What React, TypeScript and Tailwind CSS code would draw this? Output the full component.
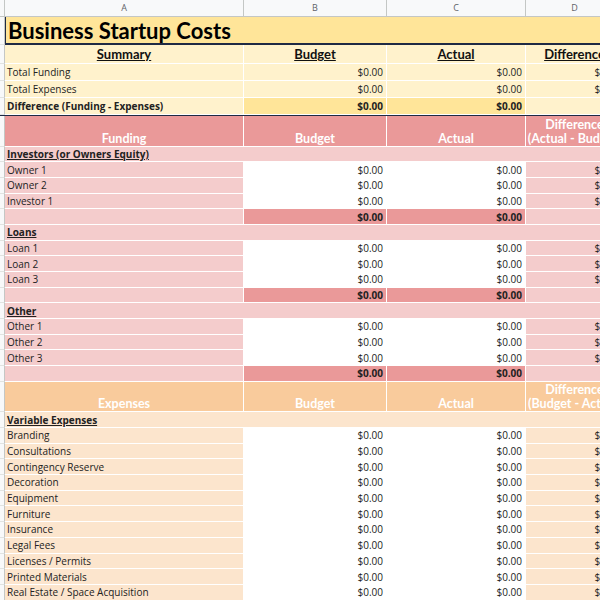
import React from 'react';

type Row =
  | { kind: 'section'; label: string; tone: 'red' | 'orange' }
  | { kind: 'item'; label: string; tone: 'red' | 'orange' }
  | { kind: 'subtotal'; tone: 'red' | 'orange' }
  | { kind: 'header'; label: string; diff: string; tone: 'red' | 'orange' };

const tones = {
  red: { light: 'bg-[#f4cccc]', dark: 'bg-[#ea9999]' },
  orange: { light: 'bg-[#fce5cd]', dark: 'bg-[#f9cb9c]' },
};

const rows: Row[] = [
  { kind: 'header', label: 'Funding', diff: '(Actual - Budget)', tone: 'red' },
  { kind: 'section', label: 'Investors (or Owners Equity)', tone: 'red' },
  { kind: 'item', label: 'Owner 1', tone: 'red' },
  { kind: 'item', label: 'Owner 2', tone: 'red' },
  { kind: 'item', label: 'Investor 1', tone: 'red' },
  { kind: 'subtotal', tone: 'red' },
  { kind: 'section', label: 'Loans', tone: 'red' },
  { kind: 'item', label: 'Loan 1', tone: 'red' },
  { kind: 'item', label: 'Loan 2', tone: 'red' },
  { kind: 'item', label: 'Loan 3', tone: 'red' },
  { kind: 'subtotal', tone: 'red' },
  { kind: 'section', label: 'Other', tone: 'red' },
  { kind: 'item', label: 'Other 1', tone: 'red' },
  { kind: 'item', label: 'Other 2', tone: 'red' },
  { kind: 'item', label: 'Other 3', tone: 'red' },
  { kind: 'subtotal', tone: 'red' },
  { kind: 'header', label: 'Expenses', diff: '(Budget - Actual)', tone: 'orange' },
  { kind: 'section', label: 'Variable Expenses', tone: 'orange' },
  { kind: 'item', label: 'Branding', tone: 'orange' },
  { kind: 'item', label: 'Consultations', tone: 'orange' },
  { kind: 'item', label: 'Contingency Reserve', tone: 'orange' },
  { kind: 'item', label: 'Decoration', tone: 'orange' },
  { kind: 'item', label: 'Equipment', tone: 'orange' },
  { kind: 'item', label: 'Furniture', tone: 'orange' },
  { kind: 'item', label: 'Insurance', tone: 'orange' },
  { kind: 'item', label: 'Legal Fees', tone: 'orange' },
  { kind: 'item', label: 'Licenses / Permits', tone: 'orange' },
  { kind: 'item', label: 'Printed Materials', tone: 'orange' },
  { kind: 'item', label: 'Real Estate / Space Acquisition', tone: 'orange' },
  { kind: 'item', label: 'Rent', tone: 'orange' },
];

const cell = 'shrink-0 border-r border-b border-white flex items-center overflow-hidden whitespace-nowrap';
const A = 'w-[239px]';
const B = 'w-[143px]';
const C = 'w-[139px]';
const D = 'w-[98px]';
const head = "font-['Lato',sans-serif] font-bold";

const RowNum = () => (
  <div className="w-[5px] shrink-0 bg-[#f8f9fa] border-r border-b border-r-[#c4c7c5] border-b-[#e1e3e1]" />
);

const Money = ({ bold }: { bold?: boolean }) => (
  <span className={`pr-[3px] ${bold ? 'font-bold' : ''}`}>$0.00</span>
);

const SheetRow = ({ row }: { row: Row }) => {
  const t = tones[row.tone];
  if (row.kind === 'header') {
    return (
      <div className="flex h-[30.5px]">
        <RowNum />
        <div className={`${cell} ${A} ${t.dark} ${head} items-end justify-center text-white text-[12.5px] leading-[14px]`}>{row.label}</div>
        <div className={`${cell} ${B} ${t.dark} ${head} items-end justify-center text-white text-[12.5px] leading-[14px]`}>Budget</div>
        <div className={`${cell} ${C} ${t.dark} ${head} items-end justify-center text-white text-[12.5px] leading-[14px]`}>Actual</div>
        <div className={`${cell} ${D} ${t.dark} ${head} flex-col justify-end items-center text-white text-[12.5px]`}>
          <span className="block leading-[14px]">Difference</span>
          <span className="block leading-[14px]">{row.diff}</span>
        </div>
      </div>
    );
  }
  if (row.kind === 'section') {
    return (
      <div className="flex h-[15.7px]">
        <RowNum />
        <div className={`${cell} w-[619px] ${t.light} pl-[2px] font-bold underline`}>{row.label}</div>
      </div>
    );
  }
  if (row.kind === 'subtotal') {
    return (
      <div className="flex h-[15.7px]">
        <RowNum />
        <div className={`${cell} ${A} ${t.light}`} />
        <div className={`${cell} ${B} ${t.dark} justify-end`}><Money bold /></div>
        <div className={`${cell} ${C} ${t.dark} justify-end`}><Money bold /></div>
        <div className={`${cell} ${D} ${t.light}`} />
      </div>
    );
  }
  return (
    <div className="flex h-[15.7px]">
      <RowNum />
      <div className={`${cell} ${A} ${t.light} pl-[2px]`}>{row.label}</div>
      <div className={`${cell} ${B} bg-white justify-end`}><Money /></div>
      <div className={`${cell} ${C} bg-white justify-end`}><Money /></div>
      <div className={`${cell} ${D} ${t.light} justify-end`}><Money /></div>
    </div>
  );
};

const SummaryRow = ({ label, bold }: { label: string; bold?: boolean }) => (
  <div className={`flex ${bold ? 'h-[18px] border-b border-[#1f2a44]' : 'h-[17px]'}`}>
    <RowNum />
    <div className={`${cell} ${A} bg-[#fff2cc] pl-[2px] ${bold ? 'font-bold' : ''}`}>{label}</div>
    <div className={`${cell} ${B} ${bold ? 'bg-[#ffe599]' : 'bg-[#fff2cc]'} justify-end`}><Money bold={bold} /></div>
    <div className={`${cell} ${C} ${bold ? 'bg-[#ffe599]' : 'bg-[#fff2cc]'} justify-end`}><Money bold={bold} /></div>
    <div className={`${cell} ${D} bg-[#fff2cc] justify-end`}>{bold ? null : <Money />}</div>
  </div>
);

const App: React.FC = () => {
  return (
    <div className="w-[600px] h-[600px] overflow-hidden bg-white font-['Open_Sans',sans-serif] text-[10px] leading-[14px] text-[#222222]">
      {/* Column letters */}
      <div className="flex h-[17px] bg-[#f8f9fa] border-b border-[#c4c7c5] text-[9px] text-[#5f6368]">
        <div className="w-[5px] shrink-0 border-r border-[#c4c7c5]" />
        {['A', 'B', 'C', 'D'].map((l, i) => (
          <div
            key={l}
            className={`${[A, B, C, D][i]} shrink-0 border-r border-[#c4c7c5] flex items-center justify-center`}
          >
            {l}
          </div>
        ))}
      </div>

      {/* Title */}
      <div className="flex h-[28px]">
        <RowNum />
        <div className={`w-[619px] shrink-0 bg-[#ffe599] border-l border-b-2 border-[#1f2a44] flex items-center pl-[2px] pt-[2px] ${head} text-[22px] leading-[26px] text-black`}>
          Business Startup Costs
        </div>
      </div>

      {/* Summary */}
      <div className="flex h-[19px]">
        <RowNum />
        {[
          ['Summary', A],
          ['Budget', B],
          ['Actual', C],
          ['Difference', D],
        ].map(([t, w]) => (
          <div key={t} className={`${cell} ${w} bg-[#fff2cc] justify-center ${head} underline text-[13px] text-[#111]`}>
            {t}
          </div>
        ))}
      </div>
      <SummaryRow label="Total Funding" />
      <SummaryRow label="Total Expenses" />
      <SummaryRow label="Difference (Funding - Expenses)" bold />

      {rows.map((r, i) => (
        <SheetRow key={i} row={r} />
      ))}
    </div>
  );
};

export default App;
